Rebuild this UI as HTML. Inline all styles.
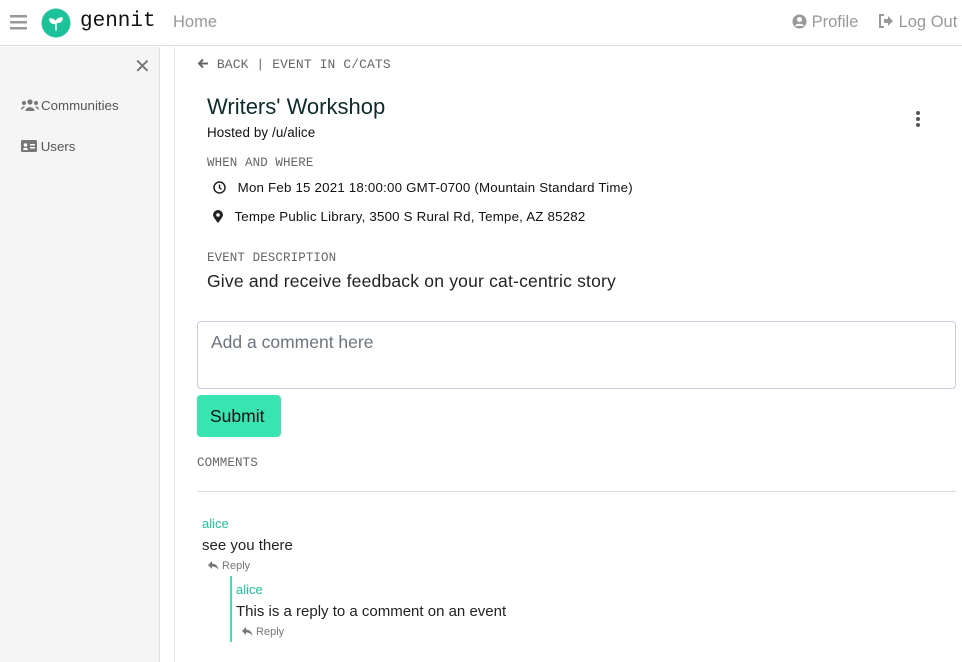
<!DOCTYPE html>
<html><head><meta charset="utf-8"><style>
*{box-sizing:border-box;margin:0;padding:0}
body{width:962px;height:662px;overflow:hidden;background:#fff;font-family:"Liberation Sans",sans-serif;color:#111;position:relative}
.abs{position:absolute;white-space:nowrap}
.mono{font-family:"Liberation Mono",monospace;color:#666;font-size:13px;letter-spacing:0.1px}
.grey{color:#999}
</style></head><body>
<div class="abs" style="left:0;top:0;width:962px;height:46px;border-bottom:1px solid #dcdcdc;background:#fff"></div>
<svg class="abs" style="left:10px;top:15px" width="17" height="15"><rect y="0" width="17" height="2.5" fill="#999"/><rect y="6" width="17" height="2.5" fill="#999"/><rect y="12" width="17" height="2.5" fill="#999"/></svg>
<svg class="abs" style="left:41px;top:8px" width="30" height="30"><circle cx="15" cy="15" r="14.5" fill="#1cc39a"/><path d="M15 22v-7M15 15c-1-3-3-4-6-4 0 3 2 5 6 4zM15 14c1-3 3-4 6-4 0 3-2 5-6 4z" fill="#fff" stroke="#fff" stroke-width="1.6" stroke-linecap="round"/></svg>
<div class="abs" style="left:80px;top:10px;font-family:'Liberation Mono',monospace;font-size:21px;color:#111">gennit</div>
<div class="abs grey" style="left:173px;top:13px;font-size:16.5px">Home</div>
<div class="abs grey" style="left:792px;top:13px;font-size:16.5px"><svg width="15" height="15" style="vertical-align:-2px"><circle cx="7.5" cy="7.5" r="7" fill="#999"/><circle cx="7.5" cy="5.5" r="2.5" fill="#fff"/><path d="M3 12c1-3 8-3 9 0" fill="#fff"/></svg> Profile</div>
<div class="abs grey" style="left:878px;top:13px;font-size:16.5px"><svg width="16" height="14" style="vertical-align:-1px"><path d="M6 1H2v12h4" fill="none" stroke="#999" stroke-width="2"/><path d="M6 5h4V2l5 5-5 5V9H6z" fill="#999"/></svg> Log Out</div>
<div class="abs" style="left:0;top:47px;width:160px;height:615px;background:#f5f5f5;border-right:1px solid #e0e0e0"></div>
<div class="abs" style="left:174px;top:47px;width:1px;height:615px;background:#e6e6e6"></div>
<div class="abs" style="left:134px;top:54px;font-size:20px;color:#777">✕</div>
<div class="abs" style="left:21px;top:98px;font-size:13.3px;color:#555"><svg width="18" height="12" style="vertical-align:-1px;margin-right:2px"><circle cx="9" cy="3" r="2.6" fill="#777"/><circle cx="3" cy="4" r="2" fill="#777"/><circle cx="15" cy="4" r="2" fill="#777"/><path d="M4.5 12c0-5 9-5 9 0zM0 11c0-4 4-4 4-3zM18 11c0-4-4-4-4-3z" fill="#777"/></svg>Communities</div>
<div class="abs" style="left:21px;top:139px;font-size:13.3px;color:#555"><svg width="16" height="12" style="vertical-align:-1px"><rect width="16" height="12" rx="1.5" fill="#777"/><circle cx="4.5" cy="5" r="1.8" fill="#fff"/><path d="M2 10c0-3 5-3 5 0z" fill="#fff"/><rect x="9" y="4" width="5" height="1.5" fill="#fff"/><rect x="9" y="7" width="5" height="1.5" fill="#fff"/></svg> Users</div>
<div class="abs mono" style="left:197px;top:57px"><svg width="12" height="11" style="vertical-align:-1px"><path d="M11 5.5H2M6 1.5l-4 4 4 4" fill="none" stroke="#666" stroke-width="2"/></svg> BACK | EVENT IN C/CATS</div>
<div class="abs" style="left:207px;top:94px;font-size:22px;color:#0e2a2a">Writers' Workshop</div>
<div class="abs" style="left:207px;top:125px;font-size:13.4px;letter-spacing:0.1px">Hosted by /u/alice</div>
<svg class="abs" style="left:915px;top:110px" width="6" height="20"><circle cx="3" cy="3" r="2" fill="#555"/><circle cx="3" cy="9" r="2" fill="#555"/><circle cx="3" cy="15" r="2" fill="#555"/></svg>
<div class="abs mono" style="left:207px;top:156px;font-size:12.5px">WHEN AND WHERE</div>
<div class="abs" style="left:213px;top:180px;font-size:13.3px;letter-spacing:0.2px"><svg width="13" height="13" style="vertical-align:-2px"><circle cx="6.5" cy="6.5" r="5.5" fill="none" stroke="#222" stroke-width="1.5"/><path d="M6.5 3.5v3.3l2 1.5" fill="none" stroke="#222" stroke-width="1.4"/></svg>&nbsp;&nbsp; Mon Feb 15 2021 18:00:00 GMT-0700 (Mountain Standard Time)</div>
<div class="abs" style="left:213px;top:209px;font-size:13.3px;letter-spacing:0.2px"><svg width="10" height="13" style="vertical-align:-2px"><path d="M5 13C1 8 0 6 0 5a5 5 0 0110 0c0 1-1 3-5 8z" fill="#222"/><circle cx="5" cy="5" r="1.8" fill="#fff"/></svg>&nbsp;&nbsp; Tempe Public Library, 3500 S Rural Rd, Tempe, AZ 85282</div>
<div class="abs mono" style="left:207px;top:251px;font-size:12.5px">EVENT DESCRIPTION</div>
<div class="abs" style="left:207px;top:271px;font-size:17.5px;letter-spacing:0.2px;color:#222">Give and receive feedback on your cat-centric story</div>
<div class="abs" style="left:197px;top:321px;width:759px;height:68px;border:1px solid #ccd;border-radius:4px;padding:10px 13px;font-size:17.5px;color:#6c757d">Add a comment here</div>
<div class="abs" style="left:197px;top:395px;width:84px;height:42px;background:#38e5b0;border-radius:4px;font-size:17.5px;color:#111;padding:11px 13px">Submit</div>
<div class="abs mono" style="left:197px;top:456px;font-size:12.5px">COMMENTS</div>
<div class="abs" style="left:197px;top:491px;width:759px;height:1px;background:#ddd"></div>
<div class="abs" style="left:202px;top:516px;font-size:13px;color:#1cc39a">alice</div>
<div class="abs" style="left:202px;top:537px;font-size:15px;color:#222">see you there</div>
<div class="abs" style="left:208px;top:560px;font-size:11px;color:#777"><svg width="11" height="9" style="vertical-align:-1px"><path d="M4 0L0 4l4 4V5.5c3 0 5 1 6.5 3.5C10 5 8 3 4 2.5z" fill="#777"/></svg> Reply</div>
<div class="abs" style="left:230px;top:576px;width:2px;height:66px;background:#38e5b0"></div>
<div class="abs" style="left:236px;top:582px;font-size:13px;color:#1cc39a">alice</div>
<div class="abs" style="left:236px;top:603px;font-size:15px;color:#222">This is a reply to a comment on an event</div>
<div class="abs" style="left:242px;top:626px;font-size:11px;color:#777"><svg width="11" height="9" style="vertical-align:-1px"><path d="M4 0L0 4l4 4V5.5c3 0 5 1 6.5 3.5C10 5 8 3 4 2.5z" fill="#777"/></svg> Reply</div>
</body></html>
